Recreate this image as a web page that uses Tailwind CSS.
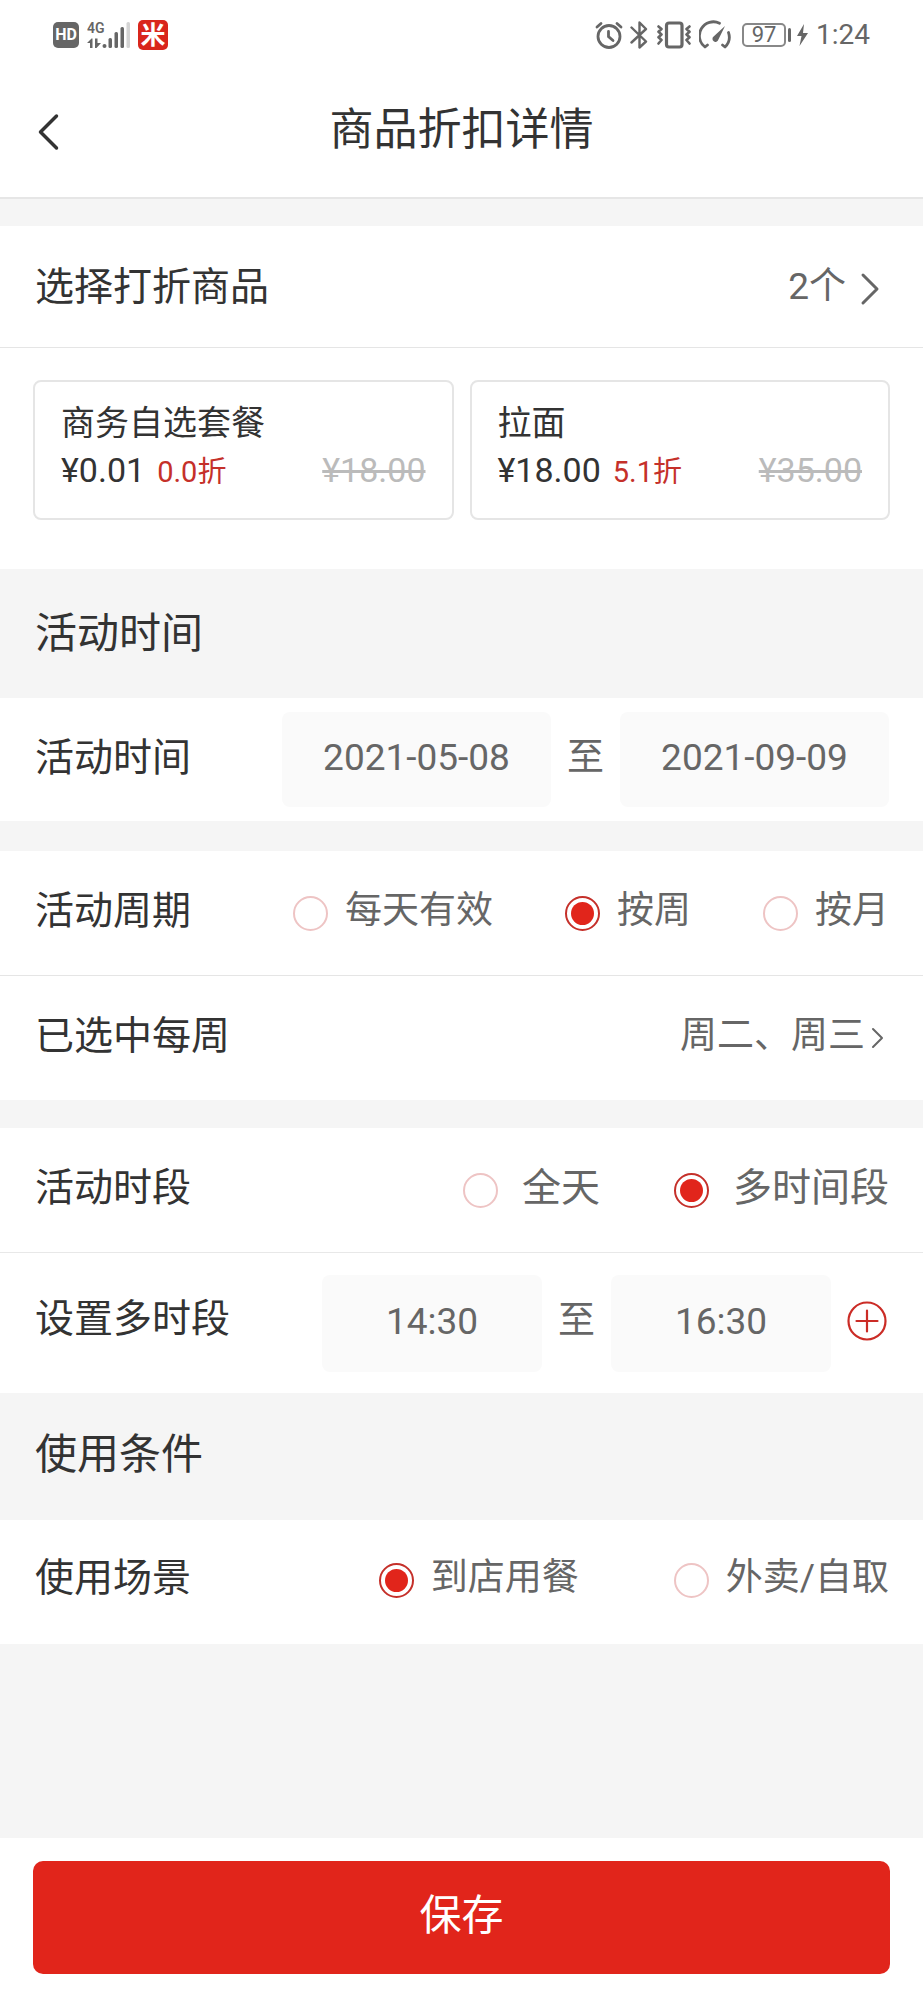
<!DOCTYPE html>
<html lang="zh-CN">
<head>
<meta charset="utf-8">
<meta name="viewport" content="width=device-width, initial-scale=1">
<title>商品折扣详情</title>
<script src="https://cdn.jsdelivr.net/npm/@tailwindcss/browser@4"></script>
</head>
<body class="flex min-h-screen flex-col bg-[#f5f5f5] font-['Roboto','Noto_Sans_CJK_SC',sans-serif] text-[#333]">

<!-- Status bar -->
<div class="flex h-[70px] items-center justify-between bg-white px-[53px] text-[#666]">
  <div class="flex items-center">
    <span class="flex h-[26px] w-[26px] items-center justify-center rounded-[5px] bg-[#666] text-[16px] leading-none font-bold text-white">HD</span>
    <svg class="ml-[8px] h-[28px] w-[44px]" viewBox="0 0 44 28" fill="#666" aria-label="4G">
      <text x="0" y="12" font-family="Roboto" font-size="14" font-weight="600">4G</text>
      <path d="M0 22l4.500-4.500h1V27H3v-5zM8 17.500h2.500V22H14l-4.500 5H8z"/>
      <rect x="15.500" y="23" width="4" height="4" rx="2"/>
      <rect x="21.500" y="17" width="3.500" height="10" rx="1.500"/>
      <rect x="27.500" y="11" width="3.500" height="16" rx="1.500"/>
      <rect x="33.500" y="6" width="3.500" height="21" rx="1.500"/>
      <rect x="39.500" y="1" width="3.500" height="26" rx="1.500" fill="#d4d4d4"/>
    </svg>
    <span class="ml-[7px] flex h-[30px] w-[30px] items-center justify-center rounded-[5px] bg-[#d9261c] text-[25px] leading-none font-bold text-white">米</span>
  </div>
  <div class="flex items-center">
    <svg class="h-[28px] w-[28px]" viewBox="0 0 28 28" fill="none" stroke="#666" stroke-width="2.800" stroke-linecap="round" aria-hidden="true">
      <circle cx="14" cy="15.500" r="11"/><path d="M13.500 10.500v5l4.500 4M2 6l4-3.500M26 6l-4-3.500"/>
    </svg>
    <svg class="ml-[7px] h-[28px] w-[18px]" viewBox="0 0 18 28" fill="none" stroke="#666" stroke-width="2.400" stroke-linejoin="round" stroke-linecap="round" aria-hidden="true">
      <path d="M1.500 6.500l14.500 14-6.500 6V1.500L16 8 1.500 21.500"/>
    </svg>
    <svg class="ml-[9px] h-[28px] w-[34px]" viewBox="0 0 34 28" fill="none" stroke="#666" stroke-linejoin="round" stroke-linecap="round" aria-hidden="true">
      <rect x="9.500" y="2" width="15.500" height="24" rx="2.500" stroke-width="3.200"/>
      <path d="M1.500 5.500l3 2.500-3 2.800 3 2.700-3 2.800 3 2.700-3 3.500M32.500 5.500l-3 2.500 3 2.800-3 2.700 3 2.800-3 2.700 3 3.500" stroke-width="2.600"/>
    </svg>
    <svg class="ml-[8px] h-[30px] w-[32px]" viewBox="0 0 32 30" fill="none" stroke="#666" stroke-width="2.800" stroke-linecap="round" stroke-linejoin="round" aria-hidden="true">
      <path d="M20.500 3.200A14 14 0 0 0 6 27l2.500-2M29.500 12.500A14 14 0 0 1 26 27l-2.500-2"/>
      <path d="M26 6L19.300 19.800a3 3 0 1 1-4.700-3.300z" fill="#666" stroke="none"/>
    </svg>
    <span class="ml-[11px] flex h-[24px] w-[44px] items-center justify-center rounded-[5px] border-2 border-[#888] text-[22px] leading-none">97</span>
    <span class="ml-[2px] h-[14px] w-[3px] rounded-sm bg-[#666]"></span>
    <svg class="ml-[5px] h-[22px] w-[12px]" viewBox="0 0 12 22" fill="#666" aria-hidden="true"><path d="M8 0L1 12h4.500L3.500 22 12 9H7z"/></svg>
    <span class="ml-[8px] text-[28px] leading-none">1:24</span>
  </div>
</div>

<!-- Title bar -->
<header class="grid h-[129px] grid-cols-[1fr_auto_1fr] items-center border-b-2 border-[#e6e6e6] bg-white px-[34px] pb-1">
  <button type="button" aria-label="返回" class="flex h-12 w-12 items-center">
    <svg class="h-[38px] w-[28px]" viewBox="0 0 28 38" fill="none" stroke="#333" stroke-width="3.500" stroke-linecap="round" stroke-linejoin="round"><path d="M22.500 3L6.500 19l16 16"/></svg>
  </button>
  <h1 class="pb-1 text-[44px] leading-[60px]">商品折扣详情</h1>
</header>

<main class="flex flex-1 flex-col">
  <!-- Discounted goods -->
  <section class="mt-[27px] bg-white">
    <button type="button" class="flex h-[122px] w-full items-center justify-between border-b border-[#e5e5e5] pr-[34px] pl-[35px] text-left">
      <span class="text-[39px] leading-[56px]">选择打折商品</span>
      <span class="flex items-center text-[37px] leading-[56px] text-[#666]">2个
        <svg class="mt-1 ml-[11px] h-[34px] w-[32px]" viewBox="0 0 32 34" fill="none" stroke="#666" stroke-width="3" stroke-linecap="round" stroke-linejoin="round" aria-hidden="true"><path d="M6 3l14 14L6 31"/></svg>
      </span>
    </button>
    <div class="grid grid-cols-2 gap-4 px-[33px] pt-[32px] pb-[49px]">
      <article class="rounded-lg border-2 border-[#e5e5e5] px-[26px] pt-[18px] pb-[24px] text-[34px] leading-[47px]">
        <h2>商务自选套餐</h2>
        <p class="flex h-[47px] items-baseline"><span>¥0.01</span><span class="ml-[12px] text-[29px] text-[#c5302a]">0.0折</span><s class="ml-auto text-[#bbb]">¥18.00</s></p>
      </article>
      <article class="rounded-lg border-2 border-[#e5e5e5] px-[26px] pt-[18px] pb-[24px] text-[34px] leading-[47px]">
        <h2>拉面</h2>
        <p class="flex h-[47px] items-baseline"><span>¥18.00</span><span class="ml-[12px] text-[29px] text-[#c5302a]">5.1折</span><s class="ml-auto text-[#bbb]">¥35.00</s></p>
      </article>
    </div>
  </section>

  <h2 class="flex h-[129px] items-center px-[35px] text-[42px] leading-[56px]">活动时间</h2>

  <!-- Date range -->
  <section class="flex h-[123px] items-center bg-white pr-[34px] pl-[35px]">
    <h3 class="pb-1 text-[39px] leading-[56px]">活动时间</h3>
    <div class="ml-auto flex items-center text-[37px] text-[#666]">
      <input type="text" aria-label="开始日期" value="2021-05-08" class="h-[95px] w-[269px] rounded-lg bg-[#fafafa] pb-1 text-center">
      <span class="w-[69px] pb-1 text-center leading-[56px]">至</span>
      <input type="text" aria-label="结束日期" value="2021-09-09" class="h-[95px] w-[269px] rounded-lg bg-[#fafafa] pb-1 text-center">
    </div>
  </section>

  <!-- Period -->
  <section class="mt-[30px] bg-white">
    <fieldset class="flex h-[125px] items-center border-b border-[#e5e5e5] pr-[34px] pl-[35px]" aria-labelledby="cycle">
      <h3 id="cycle" class="pb-1 text-[39px] leading-[56px]">活动周期</h3>
      <div class="ml-auto flex items-center gap-[72px] text-[37px] leading-[56px] text-[#666]">
        <label class="flex items-center gap-[17px]"><input type="radio" name="cycle" class="h-[35px] w-[35px] appearance-none rounded-full border-2 border-[#eec4c4] bg-clip-content p-[4px] checked:border-[#c5302a] checked:bg-[#e1251b]"><span class="pb-1">每天有效</span></label>
        <label class="flex items-center gap-[17px]"><input type="radio" name="cycle" checked class="h-[35px] w-[35px] appearance-none rounded-full border-2 border-[#eec4c4] bg-clip-content p-[4px] checked:border-[#c5302a] checked:bg-[#e1251b]"><span class="pb-1">按周</span></label>
        <label class="flex items-center gap-[17px]"><input type="radio" name="cycle" class="h-[35px] w-[35px] appearance-none rounded-full border-2 border-[#eec4c4] bg-clip-content p-[4px] checked:border-[#c5302a] checked:bg-[#e1251b]"><span class="pb-1">按月</span></label>
      </div>
    </fieldset>
    <button type="button" class="flex h-[124px] w-full items-center justify-between pr-[34px] pl-[35px] text-left">
      <span class="pb-1 text-[39px] leading-[56px]">已选中每周</span>
      <span class="flex items-center text-[37px] leading-[56px] text-[#666]"><span class="pb-1">周二、周三</span>
        <svg class="ml-[4px] h-[24px] w-[20px]" viewBox="0 0 20 24" fill="none" stroke="#666" stroke-width="2" stroke-linecap="round" stroke-linejoin="round" aria-hidden="true"><path d="M4 3l9 9-9 9"/></svg>
      </span>
    </button>
  </section>

  <!-- Time slots -->
  <section class="mt-[28px] bg-white">
    <fieldset class="flex h-[125px] items-center border-b border-[#e8e8e8] pr-[34px] pl-[35px]" aria-labelledby="slot">
      <h3 id="slot" class="pb-1 text-[39px] leading-[56px]">活动时段</h3>
      <div class="ml-auto flex items-center gap-[74px] text-[39px] leading-[56px] text-[#666]">
        <label class="flex items-center gap-[24px]"><input type="radio" name="slot" class="h-[35px] w-[35px] appearance-none rounded-full border-2 border-[#eec4c4] bg-clip-content p-[4px] checked:border-[#c5302a] checked:bg-[#e1251b]"><span class="pb-1">全天</span></label>
        <label class="flex items-center gap-[24px]"><input type="radio" name="slot" checked class="h-[35px] w-[35px] appearance-none rounded-full border-2 border-[#eec4c4] bg-clip-content p-[4px] checked:border-[#c5302a] checked:bg-[#e1251b]"><span class="pb-1">多时间段</span></label>
      </div>
    </fieldset>
    <div class="flex h-[140px] items-center pr-[34px] pl-[35px]">
      <h3 class="pb-2 text-[39px] leading-[56px]">设置多时段</h3>
      <div class="ml-auto flex items-center text-[37px] text-[#666]">
        <input type="text" aria-label="开始时间" value="14:30" class="h-[97px] w-[220px] rounded-lg bg-[#fafafa] pb-1 text-center">
        <span class="w-[69px] pb-1 text-center leading-[56px]">至</span>
        <input type="text" aria-label="结束时间" value="16:30" class="h-[97px] w-[220px] rounded-lg bg-[#fafafa] pb-1 text-center">
        <button type="button" aria-label="添加时段" class="ml-[16px] pr-[2px] pb-1">
          <svg class="block h-[40px] w-[40px]" viewBox="0 0 40 40" fill="none" stroke="#cb2c26" stroke-width="2.200" stroke-linecap="round"><circle cx="20" cy="20" r="18.500"/><path d="M20 9.500v21M9.500 20h21"/></svg>
        </button>
      </div>
    </div>
  </section>

  <h2 class="flex h-[127px] items-center px-[35px] pb-1 text-[42px] leading-[56px]">使用条件</h2>

  <!-- Usage scene -->
  <section class="bg-white">
    <fieldset class="flex h-[124px] items-center pr-[34px] pl-[35px]" aria-labelledby="scene">
      <h3 id="scene" class="pb-2 text-[39px] leading-[56px]">使用场景</h3>
      <div class="ml-auto flex items-center gap-[95px] pb-1 text-[37px] leading-[56px] text-[#666]">
        <label class="flex items-center gap-[17px]"><input type="radio" name="scene" checked class="h-[35px] w-[35px] appearance-none rounded-full border-2 border-[#eec4c4] bg-clip-content p-[4px] checked:border-[#c5302a] checked:bg-[#e1251b]"><span class="pb-1">到店用餐</span></label>
        <label class="flex items-center gap-[17px]"><input type="radio" name="scene" class="h-[35px] w-[35px] appearance-none rounded-full border-2 border-[#eec4c4] bg-clip-content p-[4px] checked:border-[#c5302a] checked:bg-[#e1251b]"><span class="pb-1">外卖/自取</span></label>
      </div>
    </fieldset>
  </section>
</main>

<footer class="bg-white px-[33px] pt-[23px] pb-[26px]">
  <button type="button" class="h-[113px] w-full rounded-[10px] bg-[#e1251b] pb-1 text-[42px] leading-[56px] text-white">保存</button>
</footer>
</body>
</html>
